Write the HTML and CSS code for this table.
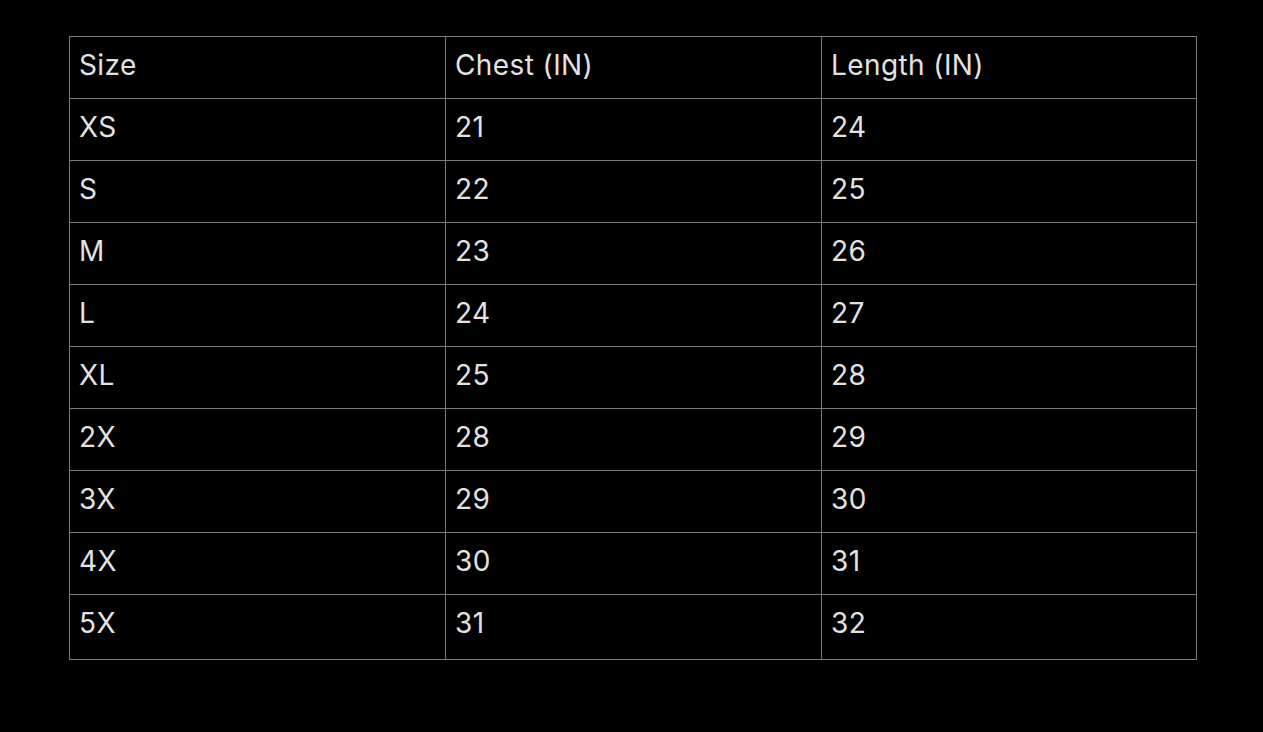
FILE: index.html
```html
<!DOCTYPE html>
<html>
<head>
<meta charset="utf-8">
<link rel="stylesheet" href="styles.css">
</head>
<body>
<div class="wrap">
<table class="size-table">
<colgroup><col class="c1"><col class="c2"><col class="c3"></colgroup>
<tr><td>Size</td><td>Chest (IN)</td><td>Length (IN)</td></tr>
<tr><td>XS</td><td>21</td><td>24</td></tr>
<tr><td>S</td><td>22</td><td>25</td></tr>
<tr><td>M</td><td>23</td><td>26</td></tr>
<tr><td>L</td><td>24</td><td>27</td></tr>
<tr><td>XL</td><td>25</td><td>28</td></tr>
<tr><td>2X</td><td>28</td><td>29</td></tr>
<tr><td>3X</td><td>29</td><td>30</td></tr>
<tr><td>4X</td><td>30</td><td>31</td></tr>
<tr class="last"><td>5X</td><td>31</td><td>32</td></tr>
</table>
</div>
</body>
</html>
```
FILE: styles.css
```css
html, body {
  margin: 0;
  padding: 0;
  background: #000;
}
.wrap {
  padding: 36px 0 0 69px;
}
.size-table {
  border-collapse: collapse;
  width: 1127px;
  table-layout: fixed;
  font-family: Inter, "Noto Sans", sans-serif;
  font-size: 28px;
  letter-spacing: 0.4px;
  color: #e2e2e2;
}
.c1, .c2 {
  width: 376px;
}
.c3 {
  width: 375px;
}
.size-table td {
  border: 1px solid #7a7a7a;
  height: 62px;
  padding: 0 10px 5px 9px;
  box-sizing: border-box;
  vertical-align: middle;
  line-height: 1;
}
.size-table tr.last td {
  height: 65px;
  padding-bottom: 9px;
}
```
